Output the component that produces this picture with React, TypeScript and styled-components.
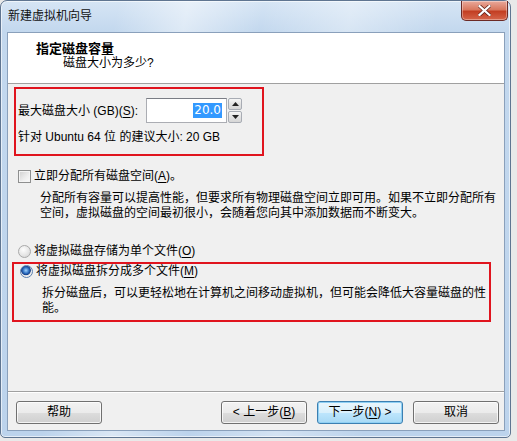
import React from 'react'
import styled, { createGlobalStyle } from 'styled-components'

const GlobalStyle = createGlobalStyle`
  html, body {
    margin: 0;
    padding: 0;
    background: #e9e9e9;
  }
  body {
    font-family: "Liberation Sans", "Noto Sans CJK SC", sans-serif;
    font-size: 12px;
    color: #000;
  }
`

const Frame = styled.div`
  box-sizing: border-box;
  width: 511px;
  height: 438px;
  display: flex;
  flex-direction: column;
  padding: 0 5px 6px 6px;
  border: 1px solid #5f7591;
  border-radius: 7px 7px 5px 5px;
  background:
    linear-gradient(100deg, rgba(255,255,255,0) 20%, rgba(255,255,255,0.45) 32%, rgba(255,255,255,0) 45%, rgba(255,255,255,0.35) 60%, rgba(255,255,255,0) 75%),
    linear-gradient(180deg, #d6e5f5 0, #c3d8ee 30px, #bcd3ec 100%);
  box-shadow: inset 0 0 0 1px rgba(255,255,255,0.6);
`

const TitleBar = styled.div`
  height: 31px;
  display: flex;
  justify-content: space-between;
  align-items: flex-start;
`

const TitleText = styled.div`
  padding: 8px 0 0 1px;
  line-height: 15px;
  color: #111;
`

const CloseButton = styled.div`
  width: 45px;
  height: 19px;
  margin-right: -3px;
  border: 1px solid #6b2a25;
  border-top: none;
  border-radius: 0 0 5px 5px;
  background: linear-gradient(180deg, #e9a99b 0, #d9785f 45%, #c33f23 55%, #d5654a 100%);
  box-shadow: inset 0 0 0 1px rgba(255,255,255,0.35);
  display: flex;
  align-items: center;
  justify-content: center;
`

const Client = styled.div`
  flex: 1;
  display: flex;
  flex-direction: column;
  border: 1px solid #8aa0bb;
  background: #f0f0f0;
`

const Header = styled.div`
  height: 51px;
  background: #fff;
  border-bottom: 1px solid #a0a0a0;
  box-sizing: border-box;
  padding: 6px 0 0 28px;
`

const HeaderTitle = styled.div`
  font-family: "Noto Sans CJK SC", sans-serif;
  font-size: 13px;
  font-weight: 700;
  line-height: 17px;
`

const HeaderSub = styled.div`
  padding-left: 27px;
  line-height: 15px;
`

const Body = styled.div`
  flex: 1;
  padding: 3px 0 0 6px;
`

const Highlight = styled.div<{ $width: number; $shift?: number }>`
  box-sizing: border-box;
  width: ${p => p.$width}px;
  margin-left: ${p => p.$shift || 0}px;
  border: 2px solid #e0141e;
`

const SizeBox = styled.div`
  padding: 9px 0 9px 2px;
`

const FieldRow = styled.div`
  display: flex;
  align-items: center;
  line-height: 15px;
`

const FieldLabel = styled.span`
  width: 128px;
  margin-top: 1px;
`

const Input = styled.div`
  box-sizing: border-box;
  width: 81px;
  height: 25px;
  border: 1px solid #abadb3;
  border-top-color: #7a7d85;
  background: #fff;
  display: flex;
  align-items: center;
  justify-content: flex-end;
  padding-right: 4px;
`

const Selected = styled.span`
  background: #3399ff;
  color: #fff;
  font-family: "DejaVu Sans", sans-serif;
  font-size: 12px;
  line-height: 15px;
  padding: 0 1px;
`

const Spinner = styled.div`
  display: flex;
  flex-direction: column;
  gap: 1px;
  margin-left: 1px;
`

const SpinButton = styled.div`
  box-sizing: border-box;
  width: 14px;
  height: 12px;
  border: 1px solid #a8acb4;
  border-radius: 2px;
  background: linear-gradient(180deg, #f6f6f6 0, #e2e2e2 50%, #d6d6d6 100%);
  display: flex;
  align-items: center;
  justify-content: center;
`

const Line = styled.div<{ $top?: number; $indent?: number }>`
  line-height: 15px;
  margin-top: ${p => p.$top || 0}px;
  padding-left: ${p => p.$indent || 0}px;
`

const Choice = styled.div<{ $top?: number }>`
  display: flex;
  align-items: center;
  line-height: 15px;
  margin-top: ${p => p.$top || 0}px;
  padding-left: 4px;
  gap: 3px;
`

const CheckBox = styled.div`
  box-sizing: border-box;
  width: 13px;
  height: 13px;
  border: 1px solid #8e8f8f;
  background: linear-gradient(135deg, #cfcfcf 0, #eeeeee 60%, #fafafa 100%);
  box-shadow: inset 0 0 0 1px #f4f4f4;
`

const Radio = styled.div<{ $checked?: boolean }>`
  box-sizing: border-box;
  width: 13px;
  height: 13px;
  border-radius: 50%;
  border: 1px solid ${p => (p.$checked ? '#5a7fae' : '#a9a9a9')};
  background: ${p =>
    p.$checked
      ? 'radial-gradient(circle at 45% 40%, #9fd3ff 0, #2a6bbd 35%, #17418a 50%, #e8e8e8 58%, #fdfdfd 100%)'
      : 'radial-gradient(circle at 40% 35%, #fdfdfd 0, #e6e6e6 55%, #cfcfcf 100%)'};
`

const SplitBox = styled.div`
  padding: 0 0 4px 2px;
`

const Desc = styled.div<{ $top: number }>`
  line-height: 15px;
  margin-top: ${p => p.$top}px;
  padding-left: 26px;
  white-space: nowrap;
`

const Footer = styled.div`
  border-top: 1px solid #a0a0a0;
  box-shadow: inset 0 1px 0 #fff;
  display: flex;
  align-items: center;
  padding: 9px 0 6px 8px;
  gap: 10px;
`

const Button = styled.div<{ $default?: boolean; $gapBefore?: number }>`
  box-sizing: border-box;
  width: 86px;
  height: 23px;
  margin-left: ${p => p.$gapBefore || 0}px;
  border: 1px solid ${p => (p.$default ? '#3c7fb1' : '#707070')};
  border-radius: 3px;
  background: ${p =>
    p.$default
      ? 'linear-gradient(180deg, #eaf6fd 0, #d9f0fc 50%, #bee6fd 51%, #a7d9f5 100%)'
      : 'linear-gradient(180deg, #f2f2f2 0, #ebebeb 50%, #dddddd 51%, #cfcfcf 100%)'};
  box-shadow: inset 0 0 0 1px ${p => (p.$default ? '#8fd0f4' : 'rgba(255,255,255,0.75)')};
  display: flex;
  align-items: center;
  justify-content: center;
  line-height: 15px;
`

const Key = styled.u`
  text-decoration-thickness: 1px;
  text-underline-offset: 2px;
`

const Arrow: React.FC<{ up?: boolean }> = ({ up }) => (
  <svg width="7" height="4" viewBox="0 0 7 4">
    <path d={up ? 'M0 4 L3.5 0 L7 4 Z' : 'M0 0 L3.5 4 L7 0 Z'} fill="#222" />
  </svg>
)

export default function App() {
  return (
    <>
      <GlobalStyle />
      <Frame>
        <TitleBar>
          <TitleText>新建虚拟机向导</TitleText>
          <CloseButton>
            <svg width="13" height="11" viewBox="0 0 13 11">
              <path d="M1.5 1 L11.5 10 M11.5 1 L1.5 10" stroke="#5a1a12" strokeWidth="3.6" strokeLinecap="square" />
              <path d="M1.5 1 L11.5 10 M11.5 1 L1.5 10" stroke="#fff" strokeWidth="2.2" strokeLinecap="square" />
            </svg>
          </CloseButton>
        </TitleBar>
        <Client>
          <Header>
            <HeaderTitle>指定磁盘容量</HeaderTitle>
            <HeaderSub>磁盘大小为多少?</HeaderSub>
          </Header>
          <Body>
            <Highlight $width={250}>
              <SizeBox>
                <FieldRow>
                  <FieldLabel>
                    最大磁盘大小 (GB)(<Key>S</Key>):
                  </FieldLabel>
                  <Input>
                    <Selected>20.0</Selected>
                  </Input>
                  <Spinner>
                    <SpinButton>
                      <Arrow up />
                    </SpinButton>
                    <SpinButton>
                      <Arrow />
                    </SpinButton>
                  </Spinner>
                </FieldRow>
                <Line $top={7}>针对 Ubuntu 64 位 的建议大小: 20 GB</Line>
              </SizeBox>
            </Highlight>

            <Choice $top={13}>
              <CheckBox />
              <span>
                立即分配所有磁盘空间(<Key>A</Key>)。
              </span>
            </Choice>
            <Desc $top={7}>
              分配所有容量可以提高性能，但要求所有物理磁盘空间立即可用。如果不立即分配所有
              <br />
              空间，虚拟磁盘的空间最初很小，会随着您向其中添加数据而不断变大。
            </Desc>

            <Choice $top={23}>
              <Radio />
              <span>
                将虚拟磁盘存储为单个文件(<Key>O</Key>)
              </span>
            </Choice>

            <Highlight $width={479} $shift={-2} style={{ marginTop: 3 }}>
              <SplitBox>
                <Choice>
                  <Radio $checked />
                  <span>
                    将虚拟磁盘拆分成多个文件(<Key>M</Key>)
                  </span>
                </Choice>
                <Desc $top={7}>
                  拆分磁盘后，可以更轻松地在计算机之间移动虚拟机，但可能会降低大容量磁盘的性
                  <br />
                  能。
                </Desc>
              </SplitBox>
            </Highlight>
          </Body>
          <Footer>
            <Button>帮助</Button>
            <Button $gapBefore={109}>
              &lt; 上一步(<Key>B</Key>)
            </Button>
            <Button $default>
              下一步(<Key>N</Key>) &gt;
            </Button>
            <Button>取消</Button>
          </Footer>
        </Client>
      </Frame>
    </>
  )
}
